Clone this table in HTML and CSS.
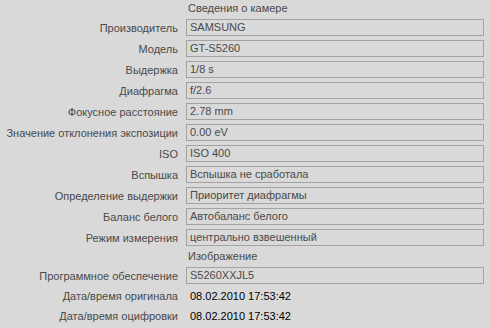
FILE: index.html
```
<!DOCTYPE html>
<html lang="ru">
<head>
    <meta charset="UTF-8">
    <title>Свойства снимка</title>
    <link rel="stylesheet" href="styles.css">
</head>
<body>
    <div class="props">
        <div class="section">Сведения о камере</div>

        <div class="row"><span class="label">Производитель</span><span class="field">SAMSUNG</span></div>
        <div class="row"><span class="label">Модель</span><span class="field">GT-S5260</span></div>
        <div class="row"><span class="label">Выдержка</span><span class="field">1/8 s</span></div>
        <div class="row"><span class="label">Диафрагма</span><span class="field">f/2.6</span></div>
        <div class="row"><span class="label">Фокусное расстояние</span><span class="field">2.78 mm</span></div>
        <div class="row"><span class="label">Значение отклонения экспозиции</span><span class="field">0.00 eV</span></div>
        <div class="row"><span class="label">ISO</span><span class="field">ISO 400</span></div>
        <div class="row"><span class="label">Вспышка</span><span class="field">Вспышка не сработала</span></div>
        <div class="row"><span class="label">Определение выдержки</span><span class="field">Приоритет диафрагмы</span></div>
        <div class="row"><span class="label">Баланс белого</span><span class="field">Автобаланс белого</span></div>
        <div class="row"><span class="label">Режим измерения</span><span class="field">центрально взвешенный</span></div>

        <div class="section">Изображение</div>

        <div class="row"><span class="label">Программное обеспечение</span><span class="field">S5260XXJL5</span></div>
        <div class="row plain"><span class="label">Дата/время оригинала</span><span class="value">08.02.2010 17:53:42</span></div>
        <div class="row plain"><span class="label">Дата/время оцифровки</span><span class="value">08.02.2010 17:53:42</span></div>
    </div>
</body>
</html>
```

FILE: styles.css
```
* {
    margin: 0;
    padding: 0;
    box-sizing: border-box;
}

body {
    background: #d9d9d9;
    color: #4a4a4a;
    font-family: 'Liberation Sans', Arial, sans-serif;
    font-size: 11px;
    width: 490px;
    height: 328px;
    overflow: hidden;
}

.props {
    display: flex;
    flex-direction: column;
    gap: 4px;
    padding: 2px 6px 0 0;
}

.section {
    height: 13px;
    line-height: 13px;
    padding-left: 188px;
}

.row {
    display: grid;
    grid-template-columns: 178px 1fr;
    column-gap: 8px;
    align-items: center;
    height: 17px;
}

.row.plain {
    height: 16px;
}

.label {
    text-align: right;
    white-space: nowrap;
}

.field {
    display: block;
    height: 17px;
    line-height: 15px;
    border: 1px solid #a3a3a3;
    padding-left: 3px;
    white-space: nowrap;
}

.value {
    color: #000;
    padding-left: 4px;
}
```
